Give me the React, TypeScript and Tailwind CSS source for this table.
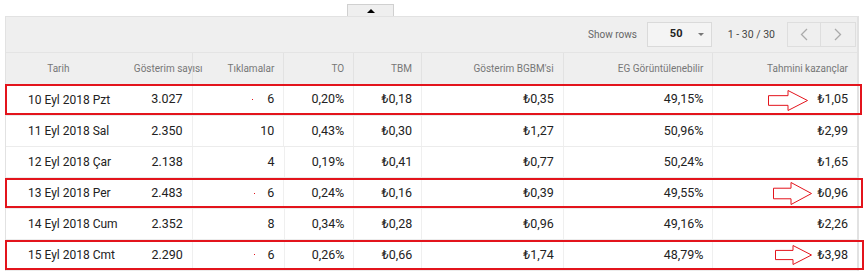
import React from 'react';

const cols = [
  { key: 'date', label: 'Tarih', w: 'w-[105px]' },
  { key: 'imp', label: 'Gösterim sayısı', w: 'w-[82px]' },
  { key: 'clicks', label: 'Tıklamalar', w: 'w-[92px]' },
  { key: 'ctr', label: 'TO', w: 'w-[70px]' },
  { key: 'cpc', label: 'TBM', w: 'w-[68px]' },
  { key: 'rpm', label: "Gösterim BGBM'si", w: 'w-[142px]' },
  { key: 'view', label: 'EG Görüntülenebilir', w: 'w-[150px]' },
  { key: 'earn', label: 'Tahmini kazançlar', w: 'w-[144px]' },
];

const rows = [
  { date: '10 Eyl 2018 Pzt', imp: '3.027', clicks: '6', ctr: '0,20%', cpc: '₺0,18', rpm: '₺0,35', view: '49,15%', earn: '₺1,05', mark: { box: 'w-[857px]', arrow: { left: 762, top: 6, w: 40, h: 21, head: 20 }, dot: { left: 246, top: 15 } } },
  { date: '11 Eyl 2018 Sal', imp: '2.350', clicks: '10', ctr: '0,43%', cpc: '₺0,30', rpm: '₺1,27', view: '50,96%', earn: '₺2,99' },
  { date: '12 Eyl 2018 Çar', imp: '2.138', clicks: '4', ctr: '0,19%', cpc: '₺0,41', rpm: '₺0,77', view: '50,24%', earn: '₺1,65' },
  { date: '13 Eyl 2018 Per', imp: '2.483', clicks: '6', ctr: '0,24%', cpc: '₺0,16', rpm: '₺0,39', view: '49,55%', earn: '₺0,96', mark: { box: 'w-[858px]', arrow: { left: 767, top: 4, w: 39, h: 23, head: 18 }, dot: { left: 248, top: 15 } } },
  { date: '14 Eyl 2018 Cum', imp: '2.352', clicks: '8', ctr: '0,34%', cpc: '₺0,28', rpm: '₺0,96', view: '49,16%', earn: '₺2,26' },
  { date: '15 Eyl 2018 Cmt', imp: '2.290', clicks: '6', ctr: '0,26%', cpc: '₺0,66', rpm: '₺1,74', view: '48,79%', earn: '₺3,98', mark: { box: 'w-[859px]', arrow: { left: 769, top: 5, w: 37, h: 20, head: 18 }, dot: { left: 248, top: 14 } } },
];

// hand-drawn style outline arrow used on the screenshot annotations
const Arrow = ({ w, h, head }: { w: number; h: number; head: number }) => {
  const mid = h / 2;
  const t = h * 0.27;
  const pts = [
    [0.5, t], [head, t], [head, 0.5], [w - 0.5, mid], [head, h - 0.5], [head, h - t], [0.5, h - t],
  ].map(p => p.join(',')).join(' ');
  return (
    <svg width={w} height={h} viewBox={`0 0 ${w} ${h}`}>
      <polygon points={pts} fill="white" stroke="#e3141c" strokeWidth="1" />
    </svg>
  );
};

const App = () => {
  return (
    <div className="w-[868px] h-[277px] bg-white font-['Roboto',sans-serif] overflow-hidden">
      {/* collapse tab */}
      <div className="pt-[4px] pl-[347px]">
        <div className="w-[47px] h-[12px] border border-b-0 border-[#d0d0d0] bg-[#efefef] flex items-center justify-center">
          <div className="w-0 h-0 border-l-[4px] border-r-[4px] border-b-[4px] border-l-transparent border-r-transparent border-b-black" />
        </div>
      </div>

      <div className="ml-[5px] w-[854px] border-t border-l border-r-2 border-[#e2e2e2] bg-[#efefef]">
        {/* toolbar */}
        <div className="h-[35px] flex items-center justify-end text-[10px]">
          <span className="text-[#666]">Show rows</span>
          <div className="ml-[10px] w-[65px] h-[25px] border border-[#dadada] bg-[#f4f4f4] flex items-center pl-[22px] pr-[7px]">
            <span className="font-bold text-[11px] text-[#222]">50</span>
            <div className="ml-auto w-0 h-0 border-l-[3px] border-r-[3px] border-t-[3px] border-l-transparent border-r-transparent border-t-[#777]" />
          </div>
          <span className="ml-[16px] text-[#444] text-[10.5px]">1 - 30 / 30</span>
          <div className="ml-[12px] mr-[1px] h-[25px] flex border border-[#dedede]">
            <div className="w-[33px] flex items-center justify-center border-r border-[#dedede]">
              <svg width="8" height="13" viewBox="0 0 8 13"><path d="M7 1 L1.5 6.5 L7 12" fill="none" stroke="#aaa" strokeWidth="1.3" /></svg>
            </div>
            <div className="w-[34px] flex items-center justify-center">
              <svg width="8" height="13" viewBox="0 0 8 13"><path d="M1 1 L6.5 6.5 L1 12" fill="none" stroke="#aaa" strokeWidth="1.3" /></svg>
            </div>
          </div>
        </div>

        {/* header */}
        <div className="flex h-[32px] text-[10px] text-[#777] border-t border-[#e4e4e4]">
          {cols.map((c, i) => (
            <div
              key={c.key}
              className={`${c.w} flex items-center whitespace-nowrap ${i === 0 ? 'justify-center' : 'justify-end pr-[9px]'} ${i >= 1 && i < 7 ? 'border-r border-[#e2e2e2]' : ''}`}
            >
              <span className={i === 1 ? 'mr-[-20px]' : ''}>{c.label}</span>
            </div>
          ))}
        </div>

        {/* body */}
        <div className="bg-white text-[12.5px] text-[#222]">
          {rows.map((r: any, ri) => (
            <div key={ri} className={`relative flex ${ri === 0 ? 'h-[32px]' : 'h-[31px]'} border-b border-[#ececec]`}>
              {cols.map((c, i) => (
                <div
                  key={c.key}
                  className={`${c.w} flex items-center whitespace-nowrap ${i === 0 ? 'pl-[22px] text-[12px]' : 'justify-end pr-[9px]'} ${i >= 1 && i < 7 ? 'border-r border-[#efefef]' : ''}`}
                >
                  {r[c.key]}
                </div>
              ))}
              {r.mark && (
                <>
                  <div className={`absolute left-[-1px] top-0 h-full ${r.mark.box} border-2 border-[#e3141c]`} />
                  <div
                    className="absolute w-[1px] h-[1px] bg-[#e3141c]"
                    style={{ left: r.mark.dot.left, top: r.mark.dot.top }}
                  />
                  <div className="absolute" style={{ left: r.mark.arrow.left, top: r.mark.arrow.top }}>
                    <Arrow w={r.mark.arrow.w} h={r.mark.arrow.h} head={r.mark.arrow.head} />
                  </div>
                </>
              )}
            </div>
          ))}
        </div>
      </div>
    </div>
  );
};

export default App;
